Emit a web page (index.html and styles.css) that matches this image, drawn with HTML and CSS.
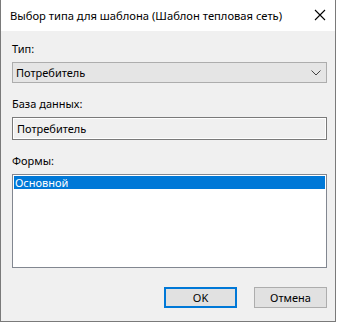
FILE: index.html
```html
<!DOCTYPE html>
<html lang="ru">
<head>
<meta charset="utf-8">
<link rel="stylesheet" href="styles.css">
</head>
<body>
<div class="window">
  <div class="titlebar">
    <span class="title">Выбор типа для шаблона (Шаблон тепловая сеть)</span>
    <svg class="close" width="12" height="12" viewBox="0 0 12 12"><path d="M1 1 L11 11 M11 1 L1 11" stroke="#000" stroke-width="1.1" fill="none"/></svg>
  </div>
  <div class="content">
    <div class="label first">Тип:</div>
    <div class="combo">
      <span>Потребитель</span>
      <svg class="chev" width="10" height="6" viewBox="0 0 10 6"><path d="M0.5 0.5 L5 5 L9.5 0.5" stroke="#444" stroke-width="1" fill="none"/></svg>
    </div>
    <div class="label">База данных:</div>
    <div class="textbox">Потребитель</div>
    <div class="label">Формы:</div>
    <div class="listbox">
      <div class="item selected">Основной</div>
    </div>
    <div class="buttons">
      <div class="btn default">OK</div>
      <div class="btn">Отмена</div>
    </div>
  </div>
</div>
</body>
</html>
```
FILE: styles.css
```css
html, body {
  margin: 0;
  padding: 0;
  background: #ffffff;
}
body {
  font-family: "Noto Sans", "Open Sans", sans-serif;
  font-size: 11px;
  color: #000;
}
.window {
  width: 336px;
  height: 322px;
  box-sizing: border-box;
  border: 1px solid #7a7a7a;
  border-top: none;
  display: flex;
  flex-direction: column;
  background: #f0f0f0;
}
.titlebar {
  height: 31px;
  background: #fff;
  display: flex;
  align-items: center;
  justify-content: space-between;
  padding-left: 9px;
  padding-right: 9px;
  flex: none;
}
.title {
  font-size: 11.2px;
  line-height: 15px;
  margin-top: -1px;
}
.close {
  display: block;
  margin-top: -1px;
}
.content {
  flex: 1;
  display: flex;
  flex-direction: column;
  padding: 10px 8px 0 11px;
}
.label {
  line-height: 15px;
  height: 15px;
  margin-top: 13px;
}
.label.first {
  margin-top: 0;
}
.combo {
  margin-top: 6px;
  height: 21px;
  box-sizing: border-box;
  border: 1px solid #adadad;
  background: #e5e5e5;
  display: flex;
  align-items: center;
  justify-content: space-between;
  padding: 0 5px 0 3px;
}
.chev {
  display: block;
}
.textbox {
  margin-top: 6px;
  height: 23px;
  box-sizing: border-box;
  border: 1px solid #7a7a7a;
  box-shadow: inset 0 0 0 1px #fff;
  background: #f0f0f0;
  padding-left: 4px;
  display: flex;
  align-items: center;
}
.listbox {
  margin-top: 6px;
  height: 94px;
  box-sizing: border-box;
  border: 1px solid #828790;
  background: #fff;
  padding: 1px;
}
.item {
  height: 13px;
  line-height: 13px;
  padding-left: 1px;
}
.item.selected {
  background: #0078d7;
  color: #fff;
}
.buttons {
  margin-top: 19px;
  display: flex;
  justify-content: flex-end;
  gap: 17px;
}
.btn {
  width: 73px;
  height: 21px;
  box-sizing: border-box;
  border: 1px solid #adadad;
  background: #e1e1e1;
  display: flex;
  align-items: center;
  justify-content: center;
}
.btn.default {
  border: 2px solid #0078d7;
}
```
